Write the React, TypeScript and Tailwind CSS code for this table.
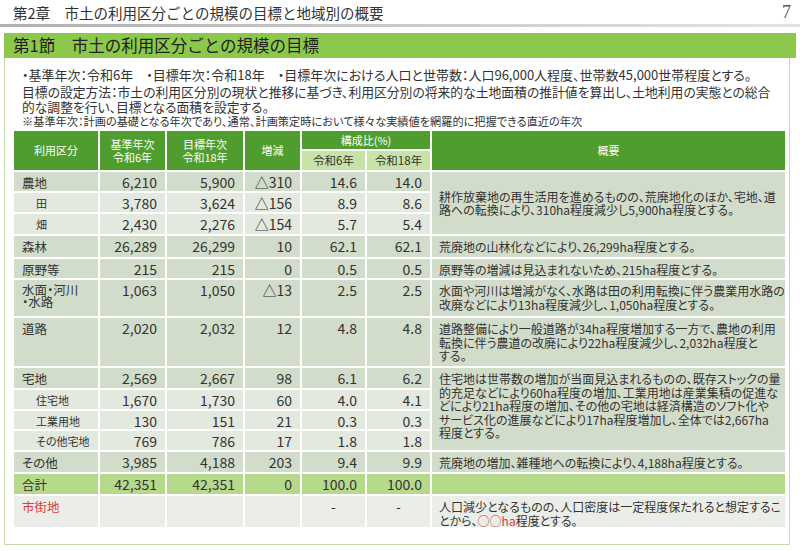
import React from "react";

type Kind = "main" | "sub" | "total" | "city";

const BG: Record<Kind, string> = {
  main: "bg-[#d2dcca]",
  sub: "bg-[#e3e9de]",
  total: "bg-[#b6d98c]",
  city: "bg-[#ebeee8]",
};

type Row = {
  label: React.ReactNode;
  kind: Kind;
  h: string;
  v: string[];
  labelCls?: string;
  desc?: React.ReactNode;
  descSpan?: number;
  descCls?: string;
  centerPct?: boolean;
};

const rows: Row[] = [
  {
    label: "農地",
    kind: "main",
    h: "h-[21px]",
    v: ["6,210", "5,900", "△310", "14.6", "14.0"],
    descSpan: 3,
    descCls: "align-middle pt-0",
    desc: (
      <>
        耕作放棄地の再生活用を進めるものの、荒廃地化のほか、宅地、道
        <br />
        路への転換により、310ha程度減少し5,900ha程度とする。
      </>
    ),
  },
  { label: "田", kind: "sub", h: "h-[21px]", v: ["3,780", "3,624", "△156", "8.9", "8.6"] },
  { label: "畑", kind: "sub", h: "h-[22px]", v: ["2,430", "2,276", "△154", "5.7", "5.4"] },
  {
    label: "森林",
    kind: "main",
    h: "h-[23px]",
    v: ["26,289", "26,299", "10", "62.1", "62.1"],
    desc: "荒廃地の山林化などにより、26,299ha程度とする。",
  },
  {
    label: "原野等",
    kind: "main",
    h: "h-[21px]",
    v: ["215", "215", "0", "0.5", "0.5"],
    desc: "原野等の増減は見込まれないため、215ha程度とする。",
  },
  {
    label: (
      <>
        水面・河川
        <br />
        ・水路
      </>
    ),
    labelCls: "pt-[4px] leading-[12px]",
    kind: "main",
    h: "h-[38px]",
    v: ["1,063", "1,050", "△13", "2.5", "2.5"],
    desc: (
      <>
        水面や河川は増減がなく、水路は田の利用転換に伴う農業用水路の
        <br />
        改廃などにより13ha程度減少し、1,050ha程度とする。
      </>
    ),
  },
  {
    label: "道路",
    kind: "main",
    h: "h-[50px]",
    v: ["2,020", "2,032", "12", "4.8", "4.8"],
    desc: (
      <>
        道路整備により一般道路が34ha程度増加する一方で、農地の利用
        <br />
        転換に伴う農道の改廃により22ha程度減少し、2,032ha程度と
        <br />
        する。
      </>
    ),
  },
  {
    label: "宅地",
    kind: "main",
    h: "h-[22px]",
    v: ["2,569", "2,667", "98", "6.1", "6.2"],
    descSpan: 4,
    desc: (
      <>
        住宅地は世帯数の増加が当面見込まれるものの、既存ストックの量
        <br />
        的充足などにより60ha程度の増加、工業用地は産業集積の促進な
        <br />
        どにより21ha程度の増加、その他の宅地は経済構造のソフト化や
        <br />
        サービス化の進展などにより17ha程度増加し、全体では2,667ha
        <br />
        程度とする。
      </>
    ),
  },
  { label: "住宅地", kind: "sub", h: "h-[21px]", v: ["1,670", "1,730", "60", "4.0", "4.1"] },
  { label: "工業用地", kind: "sub", h: "h-[20px]", v: ["130", "151", "21", "0.3", "0.3"] },
  { label: "その他宅地", kind: "sub", h: "h-[21px]", v: ["769", "786", "17", "1.8", "1.8"] },
  {
    label: "その他",
    kind: "main",
    h: "h-[22px]",
    v: ["3,985", "4,188", "203", "9.4", "9.9"],
    desc: "荒廃地の増加、雑種地への転換により、4,188ha程度とする。",
  },
  {
    label: "合計",
    kind: "total",
    h: "h-[22px]",
    v: ["42,351", "42,351", "0", "100.0", "100.0"],
    desc: "",
  },
  {
    label: <span className="text-[#d63a3a]">市街地</span>,
    kind: "city",
    h: "h-[33px]",
    v: ["", "", "", "-", "-"],
    centerPct: true,
    desc: (
      <>
        人口減少となるものの、人口密度は一定程度保たれると想定するこ
        <br />
        とから、<span className="text-[#d63a3a]">○○ha</span>程度とする。
      </>
    ),
  },
];

const cellB = "border-r-2 border-b-2 border-white";
const thG = "bg-[#4f9d2f] text-white font-normal text-[11px] leading-[13px] align-middle";

export default function App() {
  return (
    <div className="w-[800px] h-[551px] bg-white overflow-hidden text-[#333] font-['Noto_Sans_CJK_JP','Noto_Sans',sans-serif]">
      <div className="flex h-[24px] items-center justify-between pl-[13px] pr-[9px]">
        <div className="text-[14.5px] leading-none text-[#333] pt-[2px]">
          第2章　市土の利用区分ごとの規模の目標と地域別の概要
        </div>
        <div className="font-['Liberation_Serif',serif] text-[18px] leading-none text-[#555]">7</div>
      </div>
      <div className="h-[3px] bg-linear-to-r from-[#b0b0b0] to-[#e4e4e4]" />
      <div className="mt-[6px] ml-[4px] w-[786px] h-[512px] border border-[#c5dcaa]">
        <div className="-mt-px -ml-px -mr-[7px] h-[25px] bg-[#8cc84b] flex items-center pl-[9px] text-[16.5px] leading-none text-[#222]">
          第1節　市土の利用区分ごとの規模の目標
        </div>
        <div className="pl-[17px] pt-[8px] whitespace-nowrap [font-feature-settings:'palt']">
          <div className="text-[13px] leading-[17px]">
            ・基準年次：令和6年　・目標年次：令和18年　・目標年次における人口と世帯数：人口96,000人程度、世帯数45,000世帯程度とする。
          </div>
          <div className="mt-[1px] text-[12.8px] leading-[15px]">
            目標の設定方法：市土の利用区分別の現状と推移に基づき、利用区分別の将来的な土地面積の推計値を算出し、土地利用の実態との総合
          </div>
          <div className="text-[12.8px] leading-[15px]">的な調整を行い、目標となる面積を設定する。</div>
          <div className="text-[11.2px] leading-[15px]">
            ※基準年次：計画の基礎となる年次であり、通常、計画策定時において様々な実績値を網羅的に把握できる直近の年次
          </div>
        </div>
        <table className="ml-[9px] mt-[2px] w-[771px] table-fixed border-separate border-spacing-0 [font-feature-settings:'palt']">
          <colgroup>
            <col className="w-[86px]" />
            <col className="w-[67px]" />
            <col className="w-[78px]" />
            <col className="w-[57px]" />
            <col className="w-[65px]" />
            <col className="w-[65px]" />
            <col className="w-[353px]" />
          </colgroup>
          <thead>
            <tr className="h-[20px]">
              <th rowSpan={2} className={`${cellB} ${thG}`}>
                利用区分
              </th>
              <th rowSpan={2} className={`${cellB} ${thG}`}>
                基準年次
                <br />
                令和6年
              </th>
              <th rowSpan={2} className={`${cellB} ${thG}`}>
                目標年次
                <br />
                令和18年
              </th>
              <th rowSpan={2} className={`${cellB} ${thG}`}>
                増減
              </th>
              <th colSpan={2} className={`${cellB} ${thG}`}>
                構成比(%)
              </th>
              <th rowSpan={2} className={`border-b-2 border-white ${thG}`}>
                概要
              </th>
            </tr>
            <tr className="h-[21px]">
              <th className={`${cellB} bg-[#c8e3a8] text-[#333] font-normal text-[11.5px] leading-[13px] align-middle`}>令和6年</th>
              <th className={`${cellB} bg-[#c8e3a8] text-[#333] font-normal text-[11.5px] leading-[13px] align-middle`}>令和18年</th>
            </tr>
          </thead>
          <tbody>
            {rows.map((r, i) => {
              const bg = BG[r.kind];
              const isSub = r.kind === "sub";
              return (
                <tr key={i} className={r.h}>
                  <td
                    className={`${cellB} ${bg} p-0 align-top whitespace-nowrap ${
                      isSub ? "pl-[22px] text-[11px]" : "pl-[8px] text-[12.5px]"
                    } ${r.labelCls ?? "pt-[3px] leading-[15px]"}`}
                  >
                    {r.label}
                  </td>
                  {r.v.map((val, j) => (
                    <td
                      key={j}
                      className={`${cellB} ${bg} p-0 pt-[3px] align-top text-[14px] leading-[15px] ${
                        r.centerPct ? "text-center" : "text-right pr-[8px]"
                      }`}
                    >
                      {val}
                    </td>
                  ))}
                  {r.desc !== undefined && (
                    <td
                      rowSpan={r.descSpan ?? 1}
                      className={`border-b-2 border-white ${bg} p-0 pl-[7px] text-[12px] leading-[13.5px] whitespace-nowrap ${
                        r.descCls ?? "align-top pt-[4px]"
                      }`}
                    >
                      {r.desc}
                    </td>
                  )}
                </tr>
              );
            })}
          </tbody>
        </table>
      </div>
    </div>
  );
}
